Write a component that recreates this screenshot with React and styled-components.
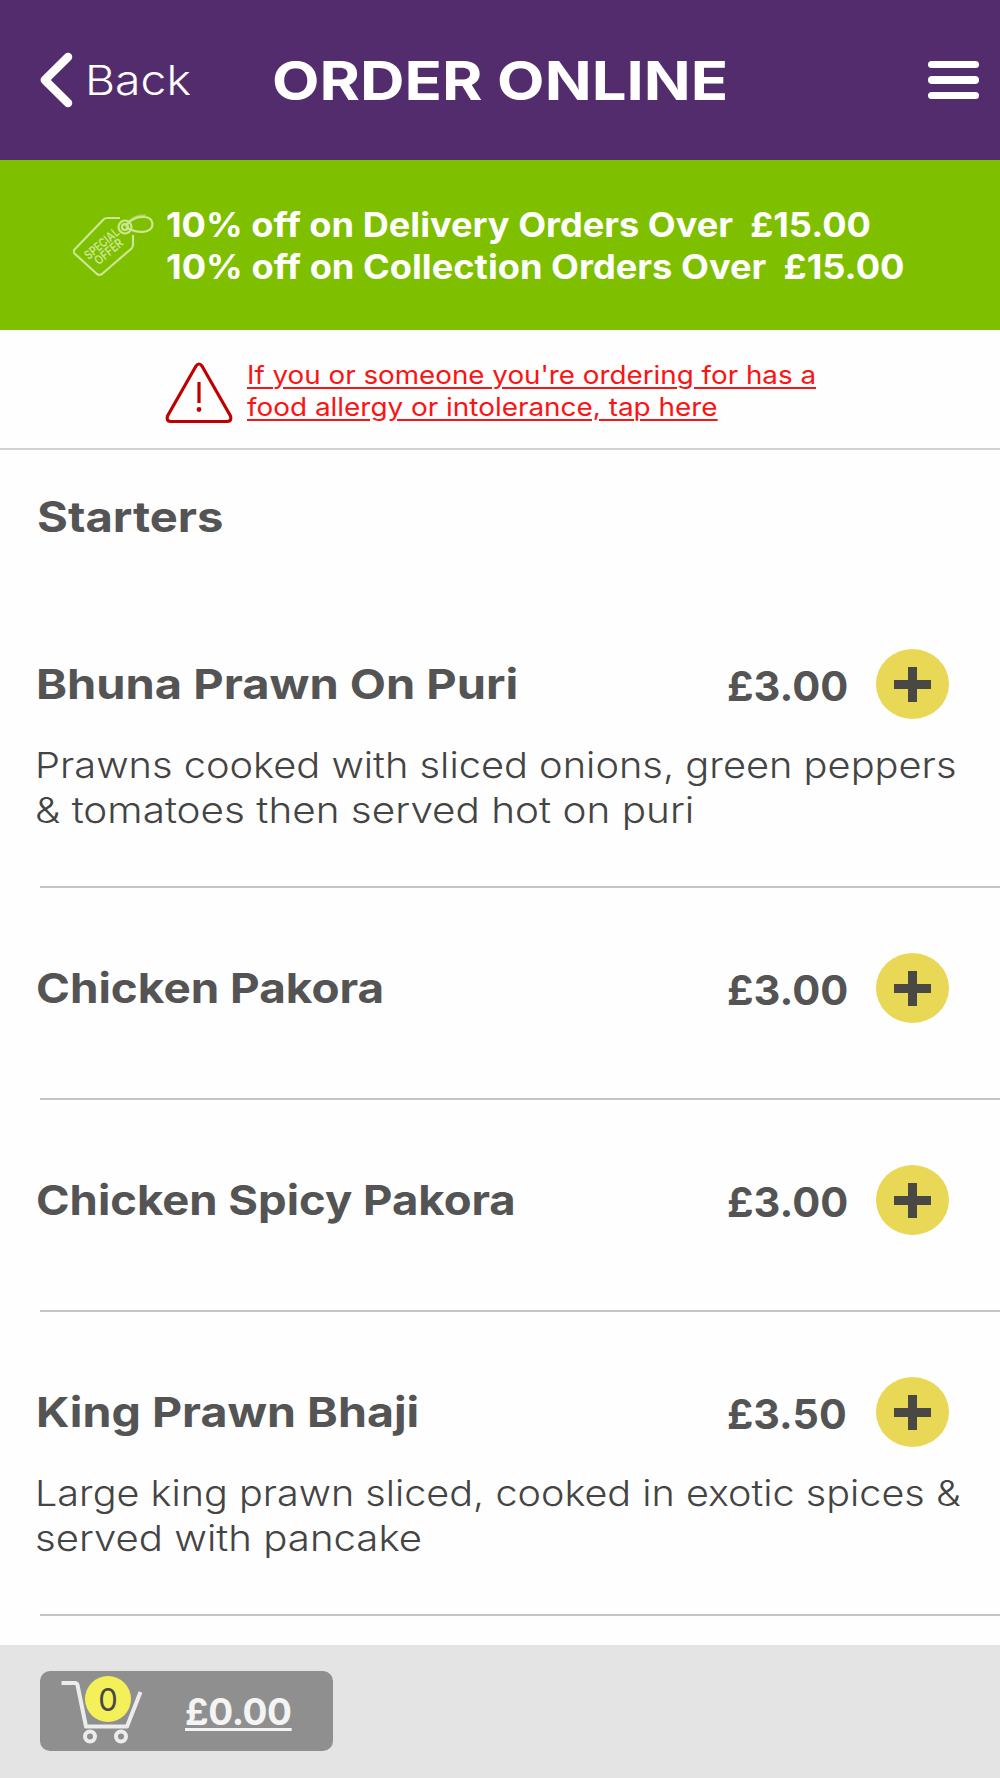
import React from "react";
import styled, { createGlobalStyle } from "styled-components";

const GlobalStyle = createGlobalStyle`
  * { box-sizing: border-box; }
  body { margin: 0; background: #fefefe; }
`;

const Screen = styled.div`
  display: flex;
  flex-direction: column;
  width: 1000px;
  height: 1778px;
  overflow: hidden;
  background: #fefefe;
  color: #545454;
  font-family: Inter, "Liberation Sans", sans-serif;
`;

const Line = styled.span`
  display: block;
  width: fit-content;
  white-space: pre;
  transform: scaleX(${(p) => p.$wide});
  transform-origin: left;
`;

const Header = styled.header`
  display: grid;
  grid-template-columns: 232px 1fr 51px;
  align-items: center;
  flex: none;
  height: 160px;
  padding: 0 21px 0 40px;
  background: #532c6d;
  color: #fff;
`;

const BackButton = styled.a`
  display: flex;
  align-items: center;
  gap: 12px;
  font-size: 41px;
  font-weight: 300;
`;

const Title = styled.h1`
  margin: 0;
  font-size: 54px;
  font-weight: 700;
`;

const MenuButton = styled.span`
  display: flex;
  flex-direction: column;
  gap: 8px;
`;

const MenuBar = styled.span`
  height: 7.5px;
  border-radius: 4px;
  background: #fff;
`;

const Offers = styled.section`
  display: flex;
  align-items: center;
  gap: 12px;
  flex: none;
  height: 170px;
  padding: 3px 0 0 73px;
  background: #7ebf00;
  color: #fff;
  font-size: 33.5px;
  font-weight: 700;
  line-height: 41.5px;
`;

const Allergy = styled.section`
  display: flex;
  align-items: center;
  gap: 14px;
  flex: none;
  height: 120px;
  padding: 3px 0 0 165px;
  border-bottom: 2px solid #d0d0d0;
`;

const AllergyLink = styled.a`
  color: #fa1414;
  font-size: 25px;
  line-height: 32px;
  text-decoration: underline;
  text-decoration-thickness: 1.5px;
  text-underline-offset: 2.5px;
`;

const Menu = styled.main`
  flex: 1;
  min-height: 0;
  overflow: hidden;
  padding-top: 37px;
`;

const SectionTitle = styled.h2`
  margin: 0 0 37px 37px;
  font-size: 42px;
  font-weight: 700;
  line-height: 60px;
`;

const Row = styled.article`
  margin-left: 40px;
  padding: 65px 0 ${(p) => (p.$described ? 53 : 75)}px;
  border-bottom: 2px solid #c4c4c6;
`;

const RowMain = styled.div`
  display: grid;
  grid-template-columns: 687px 153px 73px;
  align-items: center;
  height: 70px;
  margin-left: -4px;
  font-size: 41px;
  font-weight: 700;
`;

const Name = styled.h3`
  margin: 0;
  font-size: inherit;
`;

const Price = styled.span`
  padding: 3px 0 0 4px;
`;

const AddButton = styled.button`
  display: grid;
  place-items: center;
  width: 73px;
  height: 70px;
  padding: 0;
  border: 0;
  border-radius: 50%;
  background: #e8d856;
`;

const Description = styled.p`
  margin: 24px 0 0 -5px;
  font-size: 36px;
  font-weight: 300;
  line-height: 45px;
  color: #444;
`;

const Footer = styled.footer`
  flex: none;
  height: 133px;
  padding: 26px 0 0 40px;
  background: #e4e4e4;
`;

const Basket = styled.button`
  display: flex;
  align-items: center;
  gap: 42px;
  width: 293px;
  height: 80px;
  padding: 0 0 0 20px;
  border: 0;
  border-radius: 10px;
  background: #8f8f8f;
  color: #f4f4f4;
  font-family: inherit;
`;

const CartBox = styled.span`
  position: relative;
  width: 83px;
  height: 80px;
`;

const Count = styled.span`
  position: absolute;
  left: 25px;
  top: 5px;
  width: 46px;
  height: 46px;
  border-radius: 50%;
  background: #f4f05a;
  color: #484848;
  font-size: 31px;
  line-height: 48px;
  text-align: center;
`;

const Total = styled.span`
  font-size: 37px;
  font-weight: 700;
  letter-spacing: -0.4px;
  text-decoration: underline;
  text-decoration-thickness: 2.5px;
  text-underline-offset: 3px;
`;

const Chevron = () => (
  <svg width="33" height="56" viewBox="0 0 33 56" fill="none" stroke="#fff" strokeWidth="8.5" strokeLinecap="round" strokeLinejoin="round">
    <path d="M28 5 4.800 28 28 51" />
  </svg>
);

const OfferTag = () => (
  <svg width="81" height="68" viewBox="0 0 81 68" fill="none" stroke="#cbe793" strokeWidth="2.2" strokeLinejoin="round">
    <path d="M34 5h13M60 22v10q0 2-1.500 3.500L29 61q-2.500 1.800-5 0L1.500 40.500q-1.500-2 0-4L30.500 6.500Q32 5 34 5" />
    <circle cx="52" cy="14" r="6.500" />
    <circle cx="52" cy="14" r="3" />
    <path d="M52 13c6-7 13-10 20-9 9 1 10 11 2 14-7 2.500-14 0-21-3.500" />
    <path d="M55 9c6-5.500 12-7.500 18-6.500" opacity=".5" />
    <g fill="#cbe793" stroke="none" fontFamily="Inter, sans-serif" fontWeight="600" textAnchor="middle">
      <text transform="translate(31.500 34) rotate(-40)" fontSize="12.500" textLength="41" lengthAdjust="spacingAndGlyphs">SPECIAL</text>
      <text transform="translate(38.500 42) rotate(-40)" fontSize="12.500" textLength="33" lengthAdjust="spacingAndGlyphs">OFFER</text>
    </g>
  </svg>
);

const Warning = () => (
  <svg width="68" height="66" viewBox="0 -4 68 66" fill="none" stroke="#c00000" strokeWidth="3.2" strokeLinejoin="round" strokeLinecap="round">
    <path d="M31 4q3-4 6 0L65.500 54q1.500 5-3 5.500H5.500Q1 59 2.500 54Z" />
    <path d="M34 20v21" strokeLinecap="butt" />
    <circle cx="34" cy="47.500" r="2.400" fill="#c00000" stroke="none" />
  </svg>
);

const Plus = () => (
  <svg width="37" height="35" viewBox="0 0 37 35" fill="#4a4844">
    <path d="M14 0h9v13h14v9H23v13h-9V22H0v-9h14z" />
  </svg>
);

const Cart = () => (
  <svg width="83" height="80" viewBox="0 0 83 80" fill="none" stroke="#ececec" strokeWidth="4">
    <path d="M1.500 12h13.500q2 0 2.500 2l8.500 41.500h41l13.500-34.500" strokeLinejoin="round" />
    <circle cx="30" cy="65.500" r="5" />
    <circle cx="61" cy="65.500" r="5" />
  </svg>
);

const items = [
  {
    name: "Bhuna Prawn On Puri", wide: 1.146, price: "£3.00", priceWide: 1.015,
    lines: [["Prawns cooked with sliced onions, green peppers", 1.105], ["& tomatoes then served hot on puri", 1.124]],
  },
  { name: "Chicken Pakora", wide: 1.118, price: "£3.00", priceWide: 1.015 },
  { name: "Chicken Spicy Pakora", wide: 1.108, price: "£3.00", priceWide: 1.015 },
  {
    name: "King Prawn Bhaji", wide: 1.136, price: "£3.50", priceWide: 1.005,
    lines: [["Large king prawn sliced, cooked in exotic spices &", 1.099], ["served with pancake", 1.115]],
  },
];

export default function App() {
  return (
    <Screen>
      <GlobalStyle />
      <Header>
        <BackButton>
          <Chevron />
          <Line $wide={1.13}>Back</Line>
        </BackButton>
        <Title><Line $wide={1.142}>ORDER ONLINE</Line></Title>
        <MenuButton><MenuBar /><MenuBar /><MenuBar /></MenuButton>
      </Header>
      <Offers>
        <OfferTag />
        <div>
          <Line $wide={1.08}>{"10% off on Delivery Orders Over  £15.00"}</Line>
          <Line $wide={1.082}>{"10% off on Collection Orders Over  £15.00"}</Line>
        </div>
      </Offers>
      <Allergy>
        <Warning />
        <AllergyLink>
          <Line $wide={1.111}>If you or someone you're ordering for has a</Line>
          <Line $wide={1.116}>food allergy or intolerance, tap here</Line>
        </AllergyLink>
      </Allergy>
      <Menu>
        <SectionTitle><Line $wide={1.123}>Starters</Line></SectionTitle>
        {items.map((item) => (
          <Row key={item.name} $described={Boolean(item.lines)}>
            <RowMain>
              <Name><Line $wide={item.wide}>{item.name}</Line></Name>
              <Price><Line $wide={item.priceWide}>{item.price}</Line></Price>
              <AddButton aria-label="Add"><Plus /></AddButton>
            </RowMain>
            {item.lines && (
              <Description>
                {item.lines.map(([text, wide]) => <Line key={text} $wide={wide}>{text}</Line>)}
              </Description>
            )}
          </Row>
        ))}
      </Menu>
      <Footer>
        <Basket>
          <CartBox>
            <Cart />
            <Count>0</Count>
          </CartBox>
          <Total>£0.00</Total>
        </Basket>
      </Footer>
    </Screen>
  );
}
